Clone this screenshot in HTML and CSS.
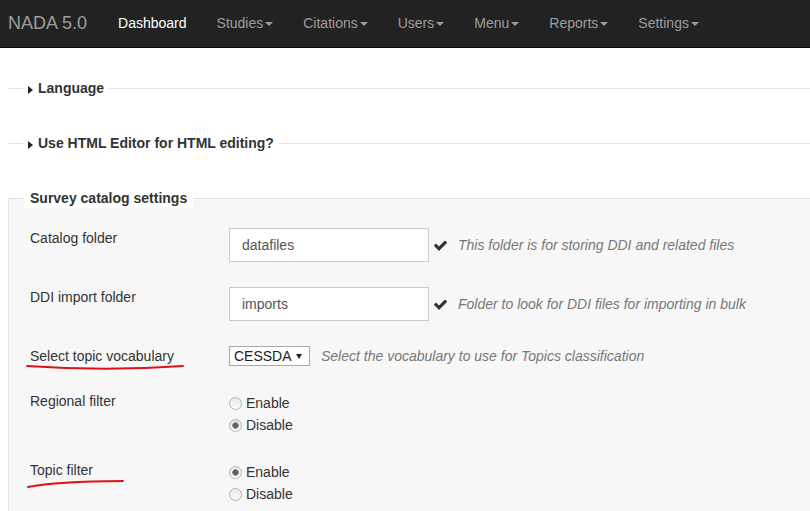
FILE: index.html
```html
<!DOCTYPE html>
<html lang="en">
<head>
<meta charset="utf-8">
<title>NADA 5.0 - Settings</title>
<link rel="stylesheet" href="styles.css">
</head>
<body>
<nav class="navbar">
  <a class="brand" href="#">NADA 5.0</a>
  <ul class="nav">
    <li class="nav-item active"><a href="#">Dashboard</a></li>
    <li class="nav-item"><a href="#">Studies<span class="caret"></span></a></li>
    <li class="nav-item"><a href="#">Citations<span class="caret"></span></a></li>
    <li class="nav-item"><a href="#">Users<span class="caret"></span></a></li>
    <li class="nav-item"><a href="#">Menu<span class="caret"></span></a></li>
    <li class="nav-item"><a href="#">Reports<span class="caret"></span></a></li>
    <li class="nav-item"><a href="#">Settings<span class="caret"></span></a></li>
  </ul>
</nav>
<main class="content">
  <fieldset class="section collapsed">
    <legend class="section-title"><span class="tri"></span>Language</legend>
  </fieldset>
  <fieldset class="section collapsed">
    <legend class="section-title"><span class="tri"></span>Use HTML Editor for HTML editing?</legend>
  </fieldset>
  <fieldset class="section open">
    <legend class="section-title plain">Survey catalog settings</legend>
    <div class="form-grid">
      <label class="field-label">Catalog folder</label>
      <div class="field-control">
        <input class="text-input" type="text" value="datafiles">
        <svg class="check" viewBox="0 0 1792 1792" width="15" height="15"><path d="M1671 566q0 40-28 68l-724 724-136 136q-28 28-68 28t-68-28l-136-136-362-362q-28-28-28-68t28-68l136-136q28-28 68-28t68 28l294 295 656-657q28-28 68-28t68 28l136 136q28 28 28 68z"/></svg>
        <span class="help">This folder is for storing DDI and related files</span>
      </div>

      <label class="field-label">DDI import folder</label>
      <div class="field-control">
        <input class="text-input" type="text" value="imports">
        <svg class="check" viewBox="0 0 1792 1792" width="15" height="15"><path d="M1671 566q0 40-28 68l-724 724-136 136q-28 28-68 28t-68-28l-136-136-362-362q-28-28-28-68t28-68l136-136q28-28 68-28t68 28l294 295 656-657q28-28 68-28t68 28l136 136q28 28 28 68z"/></svg>
        <span class="help">Folder to look for DDI files for importing in bulk</span>
      </div>

      <label class="field-label marked">Select topic vocabulary
        <svg class="scribble scribble-one" viewBox="0 0 162 10" width="162" height="10"><path d="M1 3 Q 80 8.5 157 3"/></svg>
      </label>
      <div class="field-control select-row">
        <span class="select-wrap">
          <select class="vocab-select"><option>CESSDA</option></select>
          <span class="select-arrow"></span>
        </span>
        <span class="help select-help">Select the vocabulary to use for Topics classification</span>
      </div>

      <label class="field-label">Regional filter</label>
      <div class="radio-group">
        <label class="radio-option"><input class="radio" type="radio" name="regional"><span>Enable</span></label>
        <label class="radio-option"><input class="radio" type="radio" name="regional" checked><span>Disable</span></label>
      </div>

      <label class="field-label marked">Topic filter
        <svg class="scribble scribble-two" viewBox="0 0 100 12" width="100" height="12"><path d="M2 9 Q 30 3.5 97 3"/></svg>
      </label>
      <div class="radio-group">
        <label class="radio-option"><input class="radio" type="radio" name="topic" checked><span>Enable</span></label>
        <label class="radio-option"><input class="radio" type="radio" name="topic"><span>Disable</span></label>
      </div>
    </div>
  </fieldset>
</main>
</body>
</html>
```

FILE: styles.css
```css
* { box-sizing: border-box; }

html, body {
  margin: 0;
  padding: 0;
  background: #fff;
  font-family: "Liberation Sans", Arial, sans-serif;
  font-size: 14px;
  color: #333;
  overflow: hidden;
}

a { text-decoration: none; }

/* Navbar */
.navbar {
  display: flex;
  align-items: center;
  height: 48px;
  background: #222;
  border-bottom: 1px solid #080808;
}

.brand {
  font-size: 18px;
  line-height: 47px;
  color: #9d9d9d;
  padding-left: 8px;
  margin-right: 16px;
}

.nav {
  display: flex;
  list-style: none;
  margin: 0;
  padding: 0;
}

.nav-item a {
  display: block;
  padding: 0 15px;
  line-height: 47px;
  color: #9d9d9d;
}

.nav-item.active a { color: #fff; }

.caret {
  display: inline-block;
  width: 0;
  height: 0;
  margin-left: 2px;
  vertical-align: middle;
  border-top: 4px solid #9d9d9d;
  border-left: 4px solid transparent;
  border-right: 4px solid transparent;
}

/* Content */
.content {
  padding: 30px 0 0 8px;
}

.section {
  margin: 0 0 35px 0;
  min-inline-size: 0;
  border: 0;
  border-top: 1px solid #e3e3e3;
}

.section.collapsed {
  padding: 0;
}

.section-title {
  font-weight: bold;
  font-size: 14px;
  line-height: 20px;
  color: #333;
  padding: 0 5px;
  margin-left: 15px;
}

.tri {
  display: inline-block;
  width: 0;
  height: 0;
  margin-right: 5px;
  vertical-align: -1px;
  border-left: 5px solid #222;
  border-top: 4px solid transparent;
  border-bottom: 4px solid transparent;
}

.section.open {
  background: #f7f7f7;
  border-left: 1px solid #e3e3e3;
  border-bottom: 1px solid #e3e3e3;
  padding: 20px 0 60px 21px;
}

.section-title.plain {
  background: #fff;
  padding: 0 6px;
  margin-left: -6px;
}

/* Form grid */
.form-grid {
  display: grid;
  grid-template-columns: 199px 1fr;
  row-gap: 25px;
  align-items: start;
}

.field-label {
  line-height: 20px;
  color: #333;
  position: relative;
}

.field-control {
  display: flex;
  align-items: center;
}

.text-input {
  width: 200px;
  height: 34px;
  padding: 0 12px;
  border: 1px solid #ccc;
  border-radius: 0;
  background: #fff;
  font-family: "Liberation Sans", Arial, sans-serif;
  font-size: 14px;
  color: #555;
  outline: none;
}

.check {
  margin-left: 4px;
  fill: #333;
  flex: none;
}

.help {
  margin-left: 10px;
  font-style: italic;
  color: #777;
}

.select-wrap {
  position: relative;
  display: inline-block;
  height: 20px;
}

.vocab-select {
  -webkit-appearance: none;
  appearance: none;
  width: 81px;
  height: 20px;
  padding: 0 0 0 4px;
  border: 1px solid #a9a9a9;
  border-radius: 0;
  background: #fff;
  font-family: "Liberation Sans", Arial, sans-serif;
  font-size: 14px;
  line-height: 18px;
  color: #222;
}

.select-arrow {
  position: absolute;
  right: 8px;
  top: 8px;
  width: 0;
  height: 0;
  border-top: 5px solid #222;
  border-left: 3px solid transparent;
  border-right: 3px solid transparent;
  pointer-events: none;
}

.select-help { margin-left: 11px; }

/* Radios */
.radio-group {
  display: flex;
  flex-direction: column;
  margin-top: 1px;
  margin-bottom: -1px;
}

.radio-option {
  display: flex;
  align-items: center;
  height: 22px;
  color: #333;
}

.radio {
  -webkit-appearance: none;
  appearance: none;
  width: 13px;
  height: 13px;
  margin: 0 4px 0 0;
  border: 1px solid #b4b4b4;
  border-radius: 50%;
  background: linear-gradient(#e9e9e9, #fafafa);
}

.radio:checked {
  background: radial-gradient(circle, #555 0, #666 2px, #888 3px, transparent 3.6px), linear-gradient(#e9e9e9, #fafafa);
}

/* Hand-drawn red annotation lines */
.scribble {
  position: absolute;
  overflow: visible;
}

.scribble path {
  fill: none;
  stroke: #e0101a;
  stroke-width: 1.8;
  stroke-linecap: round;
}

.scribble-one {
  left: -4px;
  top: 17px;
}

.scribble-two {
  left: -4px;
  top: 18px;
}
```
